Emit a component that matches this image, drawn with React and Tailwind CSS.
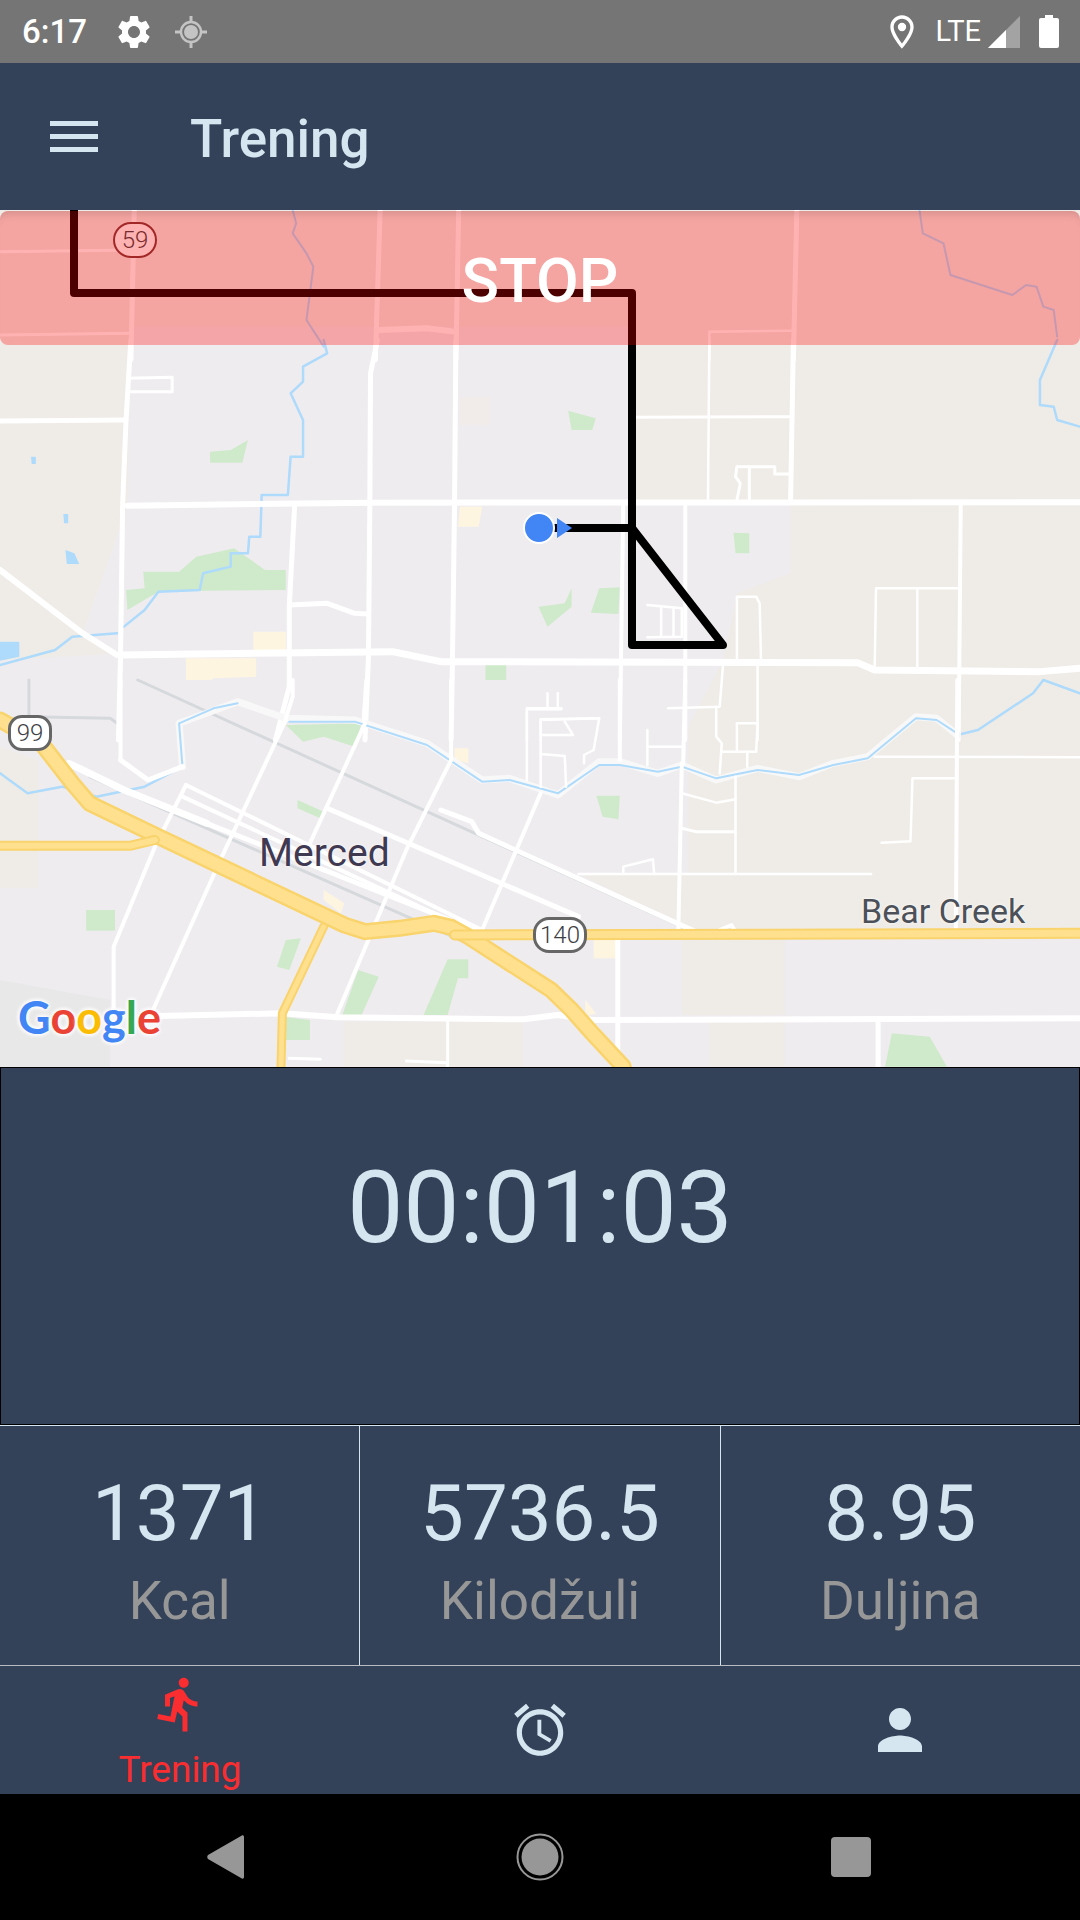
import React from 'react';

const roboto = { fontFamily: 'Roboto, sans-serif' };

const Line = ({ p, c = '#ffffff', w = 5 }) => (
  <polyline points={p} fill="none" stroke={c} strokeWidth={w} strokeLinejoin="round" strokeLinecap="round" vectorEffect="non-scaling-stroke" />
);
const Area = ({ p, c = '#cfeacb' }) => <polygon points={p} fill={c} />;

// map traced from three crops, each squeezed 1.452 x 3
const Top = ({ children }) => <g transform="translate(0 -210) scale(0.6887 0.3333)">{children}</g>;
const Mid = ({ children }) => <g transform="translate(0 130) scale(0.6887 0.3333)">{children}</g>;
const Low = ({ children }) => <g transform="translate(0 470) scale(0.6887 0.3333)">{children}</g>;

const water = '#aedafb';
const park = '#cfeacb';
const cream = '#fef5e1';
const lilac = '#efecf0';
const beige = '#efece7';
const hwyEdge = '#f9d36c';
const hwyFill = '#fee08f';
const hwy99 = '0,120 60,190 105,310 130,370 230,470 500,735 530,755 580,745 630,730 655,742 680,770 800,930 830,990 860,1060 905,1160';

const MapDrawing = () => (
  <svg viewBox="0 0 1080 857" className="block w-full h-full">
    <rect width="1080" height="857" fill={beige} />

    {/* urban zones */}
    <Mid>
      <Area c={lilac} p="190,-40 915,-40 915,490 1148,490 1148,700 1070,760 1050,960 990,1200 990,1290 860,1360 190,1300 170,940 120,880 185,500" />
      <Area c={lilac} p="0,960 180,940 180,1200 0,1200" />
      <Area c="#f1ecea" p="668,172 712,172 712,255 668,255" />
      <Area c={park} p="825,212 865,235 860,270 830,270" />
      <Area c={park} p="305,335 335,330 360,300 352,368 305,368" />
      <Area c={park} p="1065,578 1088,580 1088,640 1068,640" />
      <Area c={park} p="782,800 820,790 830,745 830,800 795,860" />
      <Area c={park} p="870,745 900,742 898,822 858,818" />
      <Area c={park} p="183,750 210,745 208,695 260,695 285,650 340,625 385,690 415,690 415,750 300,752 230,755 185,810" />
      <Area c={park} p="705,975 735,975 735,1020 748,1022 748,1055 705,1040" />
      <Area c={cream} p="668,500 700,500 695,560 665,560" />
      <Area c={cream} p="368,875 415,875 415,930 368,930" />
      <Area c={cream} p="270,955 372,955 372,1010 310,1015 290,1050 270,1040" />
      <Area c={cream} p="632,1090 650,1085 650,1200 630,1170" />
      <Area c={water} p="45,350 52,350 52,372 46,372" />
      <Area c={water} p="92,522 99,522 99,550 93,550" />
      <Area c={water} p="95,630 108,640 115,672 97,672" />
      <Area c={water} p="0,905 28,905 28,950 0,962" />
    </Mid>
    <Low>
      <Area c={lilac} p="0,0 1000,0 1000,580 840,580 1010,760 1568,770 1568,1160 0,1160" />
      <Area c={beige} p="0,200 55,240 55,625 0,625" />
      <Area c={beige} p="990,770 1140,770 1140,1005 990,1005" />
      <Area c={beige} p="500,1025 760,1025 760,1160 500,1160" />
      <Area c={beige} p="1030,1025 1140,1025 1140,1160 1030,1160" />
      <Area c="#e8e8e8" p="0,900 160,960 160,1160 0,1160" />
      <Area c={park} p="125,690 167,690 167,752 125,752" />
      <Area c={park} p="415,780 437,775 420,870 402,860" />
      <Area c={park} p="650,838 680,838 680,895 665,895 650,1005 615,1005" />
      <Area c={park} p="520,870 550,890 525,1005 497,1005" />
      <Area c={park} p="1285,1160 1295,1060 1350,1070 1375,1160" />
      <Area c={park} p="410,1010 450,1020 450,1080 415,1080" />
      <Area c={park} p="866,347 900,347 898,418 875,410" />
      <Area c={park} p="432,360 470,395 465,415 432,385" />
      <Area c={park} p="415,135 525,130 515,200 470,170 440,185" />
      <Area c={cream} p="660,205 680,205 680,250 660,240" />
      <Area c={cream} p="470,630 500,670 495,700 470,660" />
      <Area c={cream} p="862,780 895,780 895,835 862,835" />
      <Area c={cream} p="850,960 865,1000 850,1010" />
    </Low>

    {/* water */}
    <Top>
      <Line c={water} w={2} p="425,630 430,670 425,700 445,760 455,800 450,880 445,960 470,1040" />
      <Line c={water} w={2} p="1335,630 1340,700 1370,730 1380,825 1470,885 1490,855 1505,860 1515,920 1530,930 1535,1010" />
    </Top>
    <Mid>
      <Line c={water} w={2.5} p="470,0 475,40 440,80 440,125 422,160 440,240 440,350 422,350 418,465 380,465 378,590 362,590 360,640 335,640 335,680 295,700 290,750 230,755 210,810 180,860" />
      <Line c={water} w={2.5} p="170,880 105,890 80,930 0,975" />
      <Line c={water} w={2.5} p="1535,0 1510,120 1510,195 1530,200 1535,240 1568,260" />
    </Mid>
    <Low>
      <Line c={water} w={2.5} p="1390,165 1420,150 1500,40 1515,0" />
      <Line c={water} w={2.5} p="1515,0 1568,40" />
      <Line c={water} w={2.5} p="265,260 210,320 140,350 90,320 40,340 0,280" />
      <Line c="#d5d9db" w={3} p="200,0 700,470 1000,750" />
      <Line c="#d5d9db" w={3} p="130,290 690,800" />
      <Line c="#d5d9db" w={3} p="42,0 42,110 160,115 170,130" />
    </Low>

    {/* streets */}
    <Top>
      <Line p="195,630 190,1080" />
      <Line p="552,630 545,1080" />
      <Line p="666,630 662,1080" />
      <Line p="1157,630 1152,1080" />
      <Line w={2.5} p="1030,1000 1030,1080" />
      <Line w={6} p="550,990 620,985 660,995" />
      <Line w={2.5} p="1030,995 1150,992" />
      <Line w={3} p="0,755 190,750" />
      <Line w={3} p="0,1005 190,1000" />
    </Top>
    <Mid>
      <Line p="190,0 183,240 178,500 175,950 172,1200" />
      <Line p="548,0 538,100 537,490 535,950 530,1200" />
      <Line p="662,0 660,490 657,960 655,1200" />
      <Line p="1152,0 1148,480" />
      <Line w={2.5} p="1030,0 1028,480" />
      <Line p="0,243 183,240" />
      <Line w={6} p="185,497 540,488 1568,487" />
      <Line w={7} p="175,945 570,935 640,965 1245,968 1270,990 1510,995 1568,985" />
      <Line p="428,490 420,800 420,1040 400,1200" />
      <Line w={4} p="905,490 900,1200" />
      <Line w={4} p="995,490 995,1200" />
      <Line w={4} p="1395,490 1392,1200" />
      <Line w={6} p="0,690 120,880 170,945" />
      <Line w={3} p="185,115 250,112 250,155 190,155" />
      <Line w={3} p="920,232 1148,230" />
      <Line w={3} p="1070,480 1075,430 1068,410 1070,380 1125,380 1125,402 1148,402" />
      <Line w={3} p="1088,380 1088,480" />
      <Line p="420,795 475,790 515,820 535,822" />
      <Line w={2.5} p="1270,985 1272,745 1395,745" />
      <Line w={2.5} p="1332,745 1332,990" />
      <Line w={2.5} p="1070,960 1070,770 1098,770 1103,790 1105,960" />
      <Line w={2.5} p="940,795 990,805 990,890 940,892" />
      <Line w={2.5} p="960,800 960,890" />
      <Line w={2.5} p="978,805 978,890" />
      <Line w={2.5} p="1050,970 1045,1100 970,1105" />
      <Line w={2.5} p="1100,970 1100,1200" />
      <Line w={2.5} p="765,1200 765,1105 815,1105" />
      <Line w={2.5} p="795,1060 795,1105" />
      <Line w={2.5} p="810,1060 810,1105" />
      <Line w={2.5} p="785,1200 785,1140 870,1135" />
    </Mid>
    <Low>
      {/* creek */}
      <Line w={7} c="#f8f8f8" p="265,260 260,130 345,65 415,115 515,120 620,190 700,300 740,295 810,345 870,245 900,245 955,280 990,255 1040,300 1100,265 1160,290 1210,250 1260,230 1330,110 1360,115 1390,165" />
      <Line w={2} c={water} p="265,260 260,130 310,85 345,70" />
      <Line w={2} c={water} p="420,125 515,125 620,195 700,305 740,300 810,340 870,255 900,255 955,275 990,260 1040,295 1100,270 1160,285 1210,255 1260,235 1330,115 1360,120 1390,160" />
      <Line w={7} p="100,250 180,330 300,430" />
      <Line w={5} p="300,430 690,750" />
      <Line w={5} p="175,240 215,300 265,260" />
      <Line w={5} p="640,390 685,425 695,460 1010,755" />
      <Line w={5} p="475,385 840,710" />
      <Line w={4} p="270,315 700,750" />
      <Line w={4} p="265,350 640,710" />
      <Line w={4} p="270,315 225,500 165,800 165,1000" />
      <Line w={4} p="415,120 320,540 220,1000" />
      <Line w={4} p="530,130 450,490" />
      <Line w={4} p="655,240 590,510 490,1000" />
      <Line w={4} p="785,340 700,750" />
      <Line w={4} p="990,250 985,750" />
      <Line w={4} p="1390,0 1388,760" />
      <Line w={2.5} p="1068,290 1068,580" />
      <Line w={2.5} p="840,582 1265,582" />
      <Line w={2.5} p="990,340 1040,368 1068,358" />
      <Line w={3} p="990,445 1010,455 1068,455" />
      <Line w={2.5} p="1270,230 1568,232" />
      <Line w={2.5} p="1280,488 1322,484 1325,295 1385,295" />
      <Line w={2.5} p="905,582 905,560 948,538 950,582" />
      <Line w={4} p="175,0 175,240" />
      <Line w={4} p="425,0 425,50 415,115" />
      <Line w={4} p="532,0 528,120" />
      <Line w={4} p="655,0 655,240" />
      <Line w={4} p="900,0 900,240" />
      <Line w={4} p="995,0 992,250" />
      <Line w={2.5} p="765,100 765,300" />
      <Line w={2.5} p="765,88 815,88" />
      <Line w={2.5} p="785,320 785,118 870,115 862,210 848,225 848,250" />
      <Line w={2.5} p="785,222 820,228 822,320" />
      <Line w={2.5} p="820,125 832,165 785,165" />
      <Line w={2.5} p="940,150 940,255" />
      <Line w={2.5} p="940,200 990,200" />
      <Line w={2.5} p="1040,80 1040,170 1048,190 1045,280" />
      <Line w={2.5} p="1070,130 1100,130 1098,215 1048,215" />
      <Line w={2.5} p="1070,130 1070,215" />
      <Line w={2.5} p="1085,220 1085,260" />
      <Line w={6} p="230,1008 410,1000 490,1012 760,1018 810,1005 860,1020 1568,1015" />
      <Line w={5} p="897,770 897,1160" />
      <Line w={5} p="1275,1020 1275,1160" />
      <Line w={3} p="650,1020 650,1160" />
      <Line w={3} p="420,1135 465,1138" />
      <Line w={3} p="590,1143 650,1148" />
      <Line w={4} p="1045,750 1062,735 1068,755" />

      {/* highways */}
      <Line w={9} c={hwyEdge} p="470,740 410,1000 408,1160" />
      <Line w={5} c={hwyFill} p="470,740 410,1000 408,1160" />
      <Line w={17} c={hwyEdge} p={hwy99} />
      <Line w={12} c={hwyFill} p={hwy99} />
      <Line w={10} c={hwyEdge} p="0,497 190,497 225,480" />
      <Line w={6} c={hwyFill} p="0,497 190,497 225,480" />
      <Line w={11} c={hwyEdge} p="660,765 1568,760" />
      <Line w={7} c={hwyFill} p="660,765 1568,760" />
    </Low>

    {/* recorded route */}
    <polyline points="74,0 74,83 632,83 632,435 723,435 632,318 554,318" fill="none" stroke="#000000" strokeWidth="8" strokeLinejoin="round" />
    <polygon points="557,308 572,318 557,328" fill="#4285f4" />
    <circle cx="539" cy="318" r="15" fill="#4285f4" stroke="#ffffff" strokeWidth="2" />
  </svg>
);

const ShieldBadge = ({ children, className }) => (
  <div className={`absolute flex items-center justify-center bg-white text-[24px] font-light text-[#3c4043] ${className}`} style={roboto}>
    {children}
  </div>
);

const Stat = ({ value, label, divider }) => (
  <div className={`flex-1 flex flex-col items-center pt-[43px] ${divider ? 'border-r border-[#d6e6f0]' : ''}`}>
    <span className="text-[78px] leading-[90px] text-[#d6e6f0]" style={roboto}>{value}</span>
    <span className="mt-[12px] text-[53px] leading-[60px] text-[#979797]" style={roboto}>{label}</span>
  </div>
);

const App = () => {
  return (
    <div className="w-[1080px] h-[1920px] flex flex-col overflow-hidden bg-black" style={roboto}>
      {/* status bar */}
      <div className="h-[63px] flex items-center justify-between bg-[#757575] pl-[22px] pr-[21px]">
        <div className="flex items-center">
          <span className="text-[33px] font-medium text-white">6:17</span>
          <svg viewBox="0 0 24 24" className="w-[40px] h-[40px] ml-[27px]" fill="#ffffff">
            <path d="M19.14 12.94c.04-.3.06-.61.06-.94 0-.32-.02-.64-.07-.94l2.03-1.58c.18-.14.23-.41.12-.61l-1.92-3.32c-.12-.22-.37-.29-.59-.22l-2.39.96c-.5-.38-1.03-.7-1.62-.94l-.36-2.54c-.04-.24-.24-.41-.48-.41h-3.84c-.24 0-.43.17-.47.41l-.36 2.54c-.59.24-1.13.57-1.62.94l-2.39-.96c-.22-.08-.47 0-.59.22L2.74 8.87c-.12.21-.08.47.12.61l2.03 1.58c-.05.3-.09.63-.09.94s.02.64.07.94l-2.03 1.58c-.18.14-.23.41-.12.61l1.92 3.32c.12.22.37.29.59.22l2.39-.96c.5.38 1.03.7 1.62.94l.36 2.54c.05.24.24.41.48.41h3.84c.24 0 .44-.17.47-.41l.36-2.54c.59-.24 1.13-.56 1.62-.94l2.39.96c.22.08.47 0 .59-.22l1.92-3.32c.12-.22.07-.47-.12-.61l-2.01-1.58zM12 15.6c-1.98 0-3.6-1.62-3.6-3.6s1.62-3.6 3.6-3.6 3.6 1.62 3.6 3.6-1.62 3.6-3.6 3.6z" />
          </svg>
          <svg viewBox="0 0 32 32" className="w-[32px] h-[32px] ml-[21px]" fill="none" stroke="#c4c4c4">
            <circle cx="16" cy="16" r="7" fill="#c4c4c4" stroke="none" />
            <circle cx="16" cy="16" r="10" strokeWidth="2.4" />
            <path d="M16 0v6M16 26v6M0 16h6M26 16h6" strokeWidth="3" />
          </svg>
        </div>
        <div className="flex items-center">
          <svg viewBox="0 0 24 24" className="w-[40px] h-[40px]" fill="#ffffff">
            <path d="M12 2C8.13 2 5 5.13 5 9c0 5.25 7 13 7 13s7-7.75 7-13c0-3.87-3.13-7-7-7zM7 9c0-2.76 2.24-5 5-5s5 2.24 5 5c0 2.88-2.88 7.19-5 9.88C9.92 16.21 7 11.85 7 9z" />
            <circle cx="12" cy="9" r="2.5" />
          </svg>
          <span className="ml-[13px] text-[29px] text-white">LTE</span>
          <svg viewBox="0 0 32 32" className="w-[32px] h-[32px] ml-[7px]">
            <polygon points="32,0 32,32 0,32" fill="#a3a3a3" />
            <polygon points="18,14 18,32 0,32" fill="#ffffff" />
          </svg>
          <svg viewBox="0 0 20 33" className="w-[20px] h-[33px] ml-[19px]" fill="#ffffff">
            <path d="M6 0h8v3h4a2 2 0 0 1 2 2v26a2 2 0 0 1-2 2H2a2 2 0 0 1-2-2V5a2 2 0 0 1 2-2h4z" />
          </svg>
        </div>
      </div>

      {/* app bar */}
      <div className="h-[147px] flex items-center bg-[#334259] pl-[50px]">
        <svg viewBox="0 0 48 31" className="w-[48px] h-[31px]" fill="#d6e6f0">
          <rect y="0" width="48" height="5" />
          <rect y="13" width="48" height="5" />
          <rect y="26" width="48" height="5" />
        </svg>
        <h1 className="ml-[92px] pt-[6px] text-[53px] font-medium text-[#d6e6f0]">Trening</h1>
      </div>

      {/* map */}
      <div className="relative h-[857px] overflow-hidden">
        <MapDrawing />
        <ShieldBadge className="left-[113px] top-[12px] w-[44px] h-[36px] rounded-full border-[2px] border-[#7a3a3a]">59</ShieldBadge>
        <ShieldBadge className="left-[8px] top-[505px] w-[44px] h-[36px] rounded-[14px] border-[3px] border-[#666666]">99</ShieldBadge>
        <ShieldBadge className="left-[533px] top-[707px] w-[54px] h-[36px] rounded-[16px] border-[3px] border-[#666666]">140</ShieldBadge>
        <span className="absolute left-[259px] top-[620px] text-[39px] leading-[46px] text-[#3f3a52] [text-shadow:0_0_3px_#ffffff]">Merced</span>
        <span className="absolute left-[861px] top-[681px] text-[34px] leading-[40px] text-[#4c5159] [text-shadow:0_0_3px_#ffffff]">Bear Creek</span>
        <span className="absolute left-[18px] top-[781px] text-[45px] leading-[52px] font-bold [text-shadow:0_0_5px_#ffffff,0_0_5px_#ffffff,0_0_5px_#ffffff]" style={{ fontFamily: 'Lato, sans-serif' }}>
          <span className="text-[#4285f4]">G</span>
          <span className="text-[#ea4335]">o</span>
          <span className="text-[#fbbc05]">o</span>
          <span className="text-[#4285f4]">g</span>
          <span className="text-[#34a853]">l</span>
          <span className="text-[#ea4335]">e</span>
        </span>
        <button className="absolute inset-x-0 top-[1px] h-[134px] flex items-center justify-center rounded-lg bg-[#ff0000]/30 pt-[4px] text-[62px] font-medium text-white shadow-[inset_0_10px_10px_-8px_rgba(0,0,0,0.15)]">
          STOP
        </button>
      </div>

      {/* timer */}
      <div className="h-[358px] flex justify-center border border-black bg-[#334259] pt-[82px]">
        <span className="text-[100px] leading-[115px] text-[#d6e6f0]">00:01:03</span>
      </div>

      {/* stats */}
      <div className="h-[241px] flex border-y border-t-[#d6e6f0] border-b-[#b8bcc2] bg-[#334259]">
        <Stat value="1371" label="Kcal" divider />
        <Stat value="5736.5" label="Kilodžuli" divider />
        <Stat value="8.95" label="Duljina" />
      </div>

      {/* tabs */}
      <div className="h-[128px] flex bg-[#334259]">
        <div className="flex-1 flex flex-col items-center pt-[8px]">
          <svg viewBox="0 0 24 24" className="w-[60px] h-[60px]" fill="#fa2d30">
            <path d="M13.49 5.48c1.1 0 2-.9 2-2s-.9-2-2-2-2 .9-2 2 .9 2 2 2zm-3.6 13.9l1-4.4 2.1 2v6h2v-7.5l-2.1-2 .6-3c1.3 1.5 3.3 2.5 5.5 2.5v-2c-1.9 0-3.5-1-4.3-2.4l-1-1.6c-.4-.6-1-1-1.7-1-.3 0-.5.1-.8.1l-5.2 2.2v4.7h2v-3.4l1.8-.7-1.6 8.1-4.9-1-.4 2 7 1.4z" />
          </svg>
          <span className="mt-[15px] text-[37px] leading-[42px] text-[#fa2d30]">Trening</span>
        </div>
        <div className="flex-1 flex justify-center pt-[33px]">
          <svg viewBox="0 0 24 24" className="w-[62px] h-[62px]" fill="#d6e6f0">
            <path d="M22 5.72l-4.6-3.86-1.29 1.53 4.6 3.86L22 5.72zM7.88 3.39L6.6 1.86 2 5.71l1.29 1.53 4.59-3.85zM12.5 8H11v6l4.75 2.85.75-1.23-4-2.37V8zM12 4c-4.97 0-9 4.03-9 9s4.03 9 9 9 9-4.03 9-9-4.03-9-9-9zm0 16c-3.87 0-7-3.13-7-7s3.13-7 7-7 7 3.13 7 7-3.13 7-7 7z" />
          </svg>
        </div>
        <div className="flex-1 flex justify-center pt-[31px]">
          <svg viewBox="0 0 24 24" className="w-[66px] h-[66px]" fill="#d6e6f0">
            <path d="M12 12c2.21 0 4-1.79 4-4s-1.79-4-4-4-4 1.79-4 4 1.79 4 4 4zm0 2c-2.67 0-8 1.34-8 4v2h16v-2c0-2.66-5.33-4-8-4z" />
          </svg>
        </div>
      </div>

      {/* android nav bar */}
      <div className="flex-1 flex items-center justify-between bg-black pl-[207px] pr-[209px] pb-[1px]">
        <svg viewBox="0 0 37 44" className="w-[37px] h-[44px]" fill="#979797">
          <path d="M37 2v40c0 2-2 2-3 1L1 24c-1-1-1-3 0-4L34 1c1-1 3-1 3 1z" />
        </svg>
        <svg viewBox="0 0 48 48" className="w-[48px] h-[48px] ml-[5px]" fill="#979797">
          <circle cx="24" cy="24" r="18.5" />
          <circle cx="24" cy="24" r="22.5" fill="none" stroke="#979797" strokeWidth="2" />
        </svg>
        <div className="w-[40px] h-[40px] rounded-[4px] bg-[#979797]" />
      </div>
    </div>
  );
};

export default App;
